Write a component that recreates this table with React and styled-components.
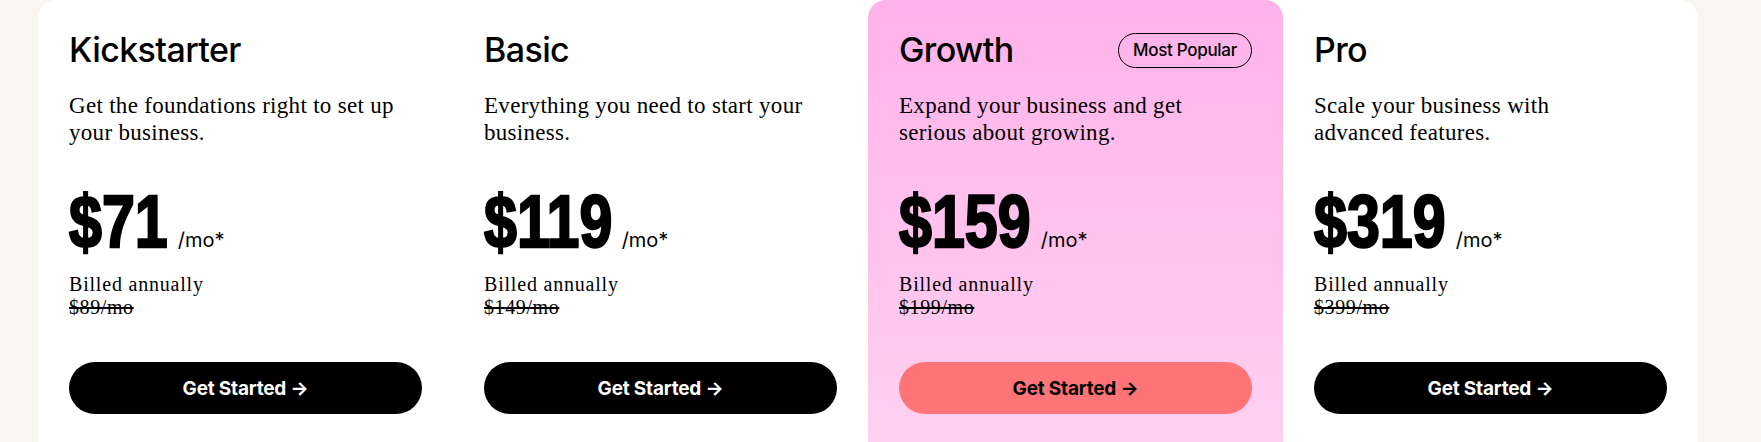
import React from 'react'
import styled, { createGlobalStyle } from 'styled-components'

const GlobalStyle = createGlobalStyle`
html, body {
  margin: 0;
  padding: 0;
  background: #f9f6f1;
  overflow: hidden;
}
`

const Page = styled.div`
padding-left: 38px;
`

const Panel = styled.div`
width: 1660px;
display: grid;
grid-template-columns: repeat(4, 415px);
background: #ffffff;
border-radius: 18px 18px 0 0;
`

const Card = styled.div`
box-sizing: border-box;
padding: 30px 31px 60px;
min-height: 470px;
border-radius: ${p => (p.featured ? '18px 18px 0 0' : '0')};
background: ${p => (p.featured ? 'linear-gradient(180deg, #ffb2ea 0%, #ffd3f1 100%)' : 'transparent')};
display: flex;
flex-direction: column;
`

const Header = styled.div`
display: flex;
align-items: center;
justify-content: space-between;
`

const Title = styled.h2`
margin: 0;
font-family: Inter, "Liberation Sans", sans-serif;
font-weight: 500;
font-size: 34px;
line-height: 40px;
letter-spacing: -0.6px;
color: #000;
`

const Badge = styled.span`
box-sizing: border-box;
height: 35px;
padding: 0 14px;
display: inline-flex;
align-items: center;
border: 1px solid #000;
border-radius: 999px;
font-family: Inter, "Liberation Sans", sans-serif;
font-weight: 500;
font-size: 17px;
letter-spacing: -0.3px;
color: #000;
`

const Desc = styled.p`
margin: 22px 0 0;
max-width: 353px;
font-family: "Liberation Serif", serif;
font-size: 23px;
line-height: 27px;
letter-spacing: 0.3px;
color: #000;
white-space: pre-line;
`

const PriceRow = styled.div`
margin-top: 39px;
display: flex;
align-items: baseline;
`

const Price = styled.span`
display: inline-block;
font-family: "Liberation Sans", Arial, sans-serif;
font-weight: 700;
font-size: 74px;
line-height: 74px;
color: #000;
-webkit-text-stroke: 2.4px #000;
transform: scaleX(0.8);
transform-origin: left center;
margin-right: ${p => -p.chars * 0.1112}em;
`

const Per = styled.span`
margin-left: 10px;
font-family: Inter, "Liberation Sans", sans-serif;
font-size: 20px;
color: #000;
`

const Billed = styled.div`
margin-top: 14px;
font-family: "Liberation Serif", serif;
font-size: 20px;
line-height: 23px;
letter-spacing: 0.8px;
color: #000;
`

const OldPrice = styled.div`
font-family: "Liberation Serif", serif;
font-size: 20px;
line-height: 23px;
letter-spacing: 0.6px;
color: #000;
text-decoration: line-through;
`

const Button = styled.button`
margin-top: 43px;
height: 52px;
width: 100%;
border: none;
border-radius: 999px;
cursor: pointer;
background: ${p => (p.featured ? '#ff7477' : '#000')};
color: ${p => (p.featured ? '#000' : '#fff')};
font-family: Inter, "Liberation Sans", sans-serif;
font-weight: 700;
font-size: 19px;
letter-spacing: -0.2px;
`

const plans = [
  { name: 'Kickstarter', desc: 'Get the foundations right to set up\nyour business.', price: '$71', old: '$89/mo' },
  { name: 'Basic', desc: 'Everything you need to start your\nbusiness.', price: '$119', old: '$149/mo' },
  { name: 'Growth', desc: 'Expand your business and get\nserious about growing.', price: '$159', old: '$199/mo', featured: true },
  { name: 'Pro', desc: 'Scale your business with\nadvanced features.', price: '$319', old: '$399/mo' }
]

const App = () => {
  return (
    <Page>
      <GlobalStyle />
      <Panel>
        {plans.map(plan => (
          <Card key={plan.name} featured={plan.featured}>
            <Header>
              <Title>{plan.name}</Title>
              {plan.featured && <Badge>Most Popular</Badge>}
            </Header>
            <Desc>{plan.desc}</Desc>
            <PriceRow>
              <Price chars={plan.price.length}>{plan.price}</Price>
              <Per>/mo*</Per>
            </PriceRow>
            <Billed>Billed annually</Billed>
            <OldPrice>{plan.old}</OldPrice>
            <Button featured={plan.featured}>Get Started →</Button>
          </Card>
        ))}
      </Panel>
    </Page>
  )
}

export default App
